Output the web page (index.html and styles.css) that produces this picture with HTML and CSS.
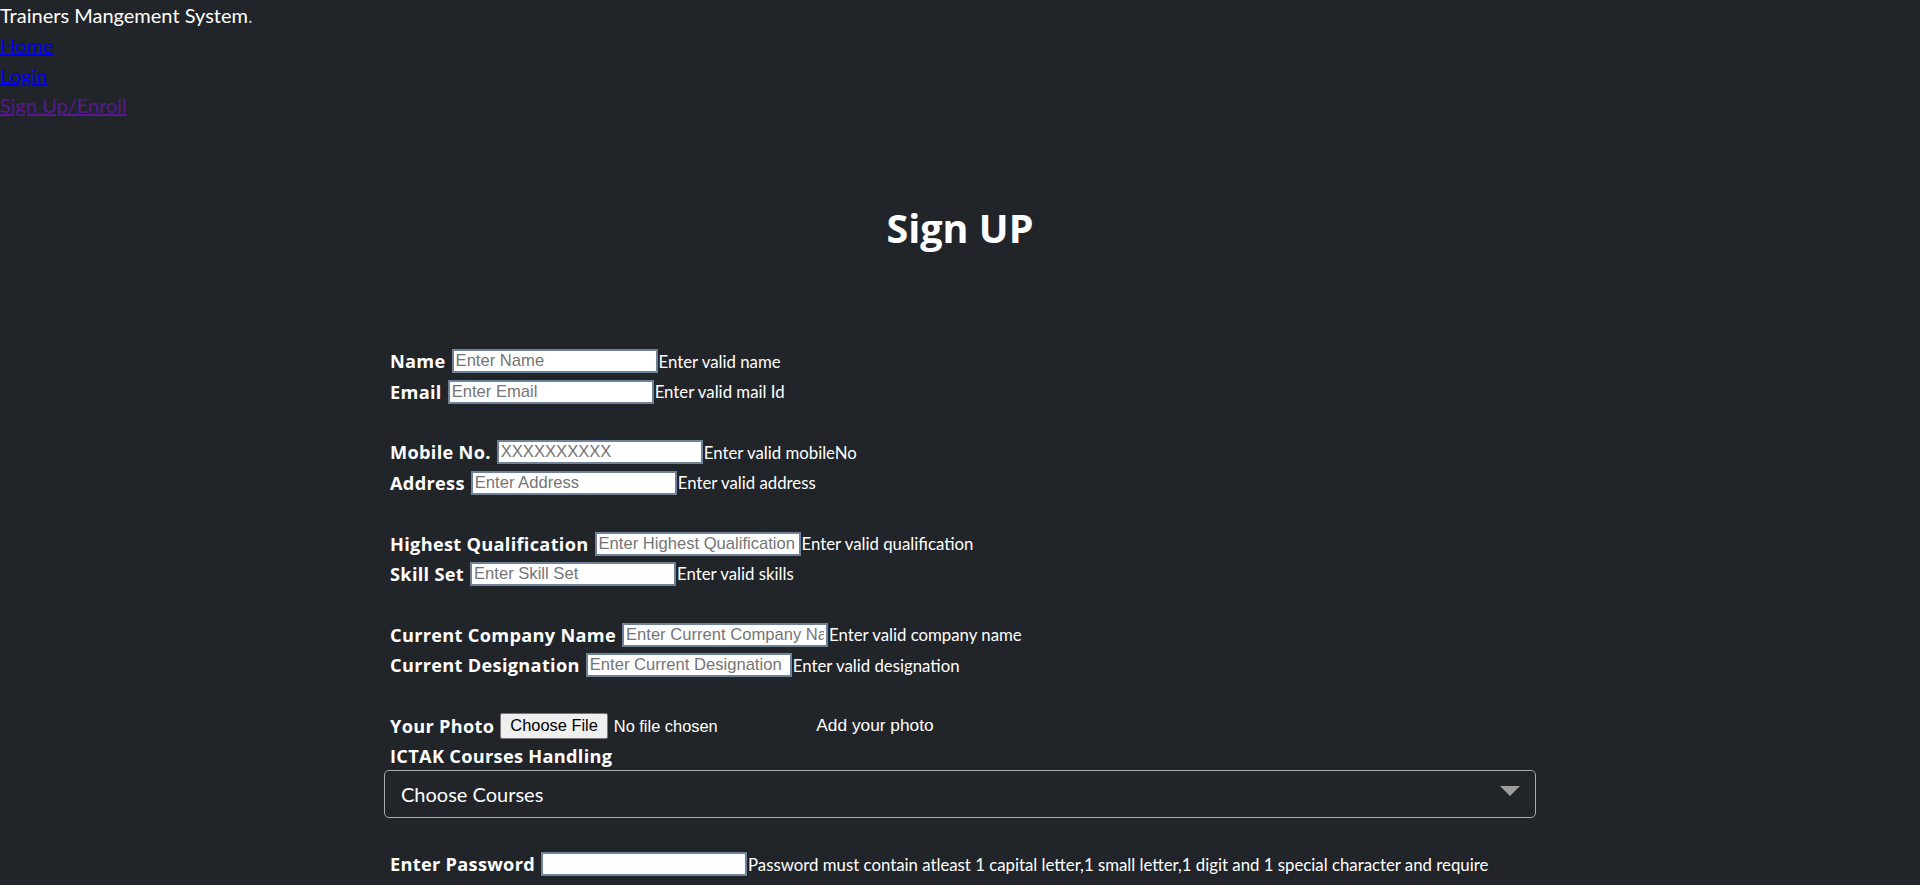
FILE: index.html
```html
<!DOCTYPE html>
<html lang="en">
<head>
<meta charset="utf-8">
<title>Sign UP</title>
<link rel="stylesheet" href="styles.css">
</head>
<body>
<header class="top">
  <div class="brand">Trainers Mangement System<span class="dot">.</span></div>
  <a class="nav-link" href="#home">Home</a>
  <a class="nav-link" href="#login">Login</a>
  <a class="nav-link visited" href="#signup">Sign Up/Enroll</a>
</header>
<main class="page">
  <h1 class="title">Sign UP</h1>
  <form class="form">
    <div class="row"><label class="lbl">Name</label><input class="txt" type="text" placeholder="Enter Name"><span class="hint">Enter valid name</span></div>
    <div class="row"><label class="lbl">Email</label><input class="txt" type="text" placeholder="Enter Email"><span class="hint">Enter valid mail Id</span></div>
    <div class="spacer"></div>
    <div class="row"><label class="lbl">Mobile No.</label><input class="txt" type="text" placeholder="XXXXXXXXXX"><span class="hint">Enter valid mobileNo</span></div>
    <div class="row"><label class="lbl">Address</label><input class="txt" type="text" placeholder="Enter Address"><span class="hint">Enter valid address</span></div>
    <div class="spacer"></div>
    <div class="row"><label class="lbl">Highest Qualification</label><input class="txt" type="text" placeholder="Enter Highest Qualification"><span class="hint">Enter valid qualification</span></div>
    <div class="row"><label class="lbl">Skill Set</label><input class="txt" type="text" placeholder="Enter Skill Set"><span class="hint">Enter valid skills</span></div>
    <div class="spacer"></div>
    <div class="row"><label class="lbl">Current Company Name</label><input class="txt" type="text" placeholder="Enter Current Company Name"><span class="hint">Enter valid company name</span></div>
    <div class="row"><label class="lbl">Current Designation</label><input class="txt" type="text" placeholder="Enter Current Designation"><span class="hint">Enter valid designation</span></div>
    <div class="spacer"></div>
    <div class="row"><label class="lbl">Your Photo</label><input class="file" type="file"><span class="hint arial">Add your photo</span></div>
    <div class="row"><label class="lbl">ICTAK Courses Handling</label></div>
    <div class="select-wrap">
      <select class="select">
        <option>Choose Courses</option>
      </select>
    </div>
    <div class="spacer"></div>
    <div class="row"><label class="lbl">Enter Password</label><input class="txt pwd" type="password"><span class="hint">Password must contain atleast 1 capital letter,1 small letter,1 digit and 1 special character and require</span></div>
  </form>
</main>
</body>
</html>
```

FILE: styles.css
```css
html, body {
  margin: 0;
  padding: 0;
}
body {
  background: #212529;
  color: #ffffff;
  font-family: Lato, "Open Sans", sans-serif;
  overflow: hidden;
  height: 885px;
}
.top {
  display: flex;
  flex-direction: column;
  align-items: flex-start;
  font-size: 20px;
  line-height: 30px;
}
.brand {
  color: #ffffff;
}
.dot {
  color: #b9bcc0;
}
.nav-link {
  color: #0000ee;
  text-decoration: underline;
}
.nav-link.visited {
  color: #551a8b;
}
.page {
  display: flex;
  flex-direction: column;
  align-items: center;
}
.title {
  margin: 84px 0 0;
  font-family: "Open Sans", Lato, sans-serif;
  font-size: 39.5px;
  line-height: 48px;
  font-weight: 700;
}
.form {
  width: 1152px;
  margin-top: 94px;
  display: flex;
  flex-direction: column;
}
.row {
  display: flex;
  align-items: center;
  height: 30.4px;
  padding-left: 6px;
  font-size: 17.6px;
}
.spacer {
  height: 30.4px;
}
.lbl {
  font-family: "Open Sans", Lato, sans-serif;
  font-weight: 700;
  font-size: 18.2px;
  letter-spacing: 0.3px;
  margin-right: 6px;
  white-space: nowrap;
}
.txt {
  box-sizing: border-box;
  width: 206px;
  height: 24px;
  border: 2px solid #6f8297;
  padding: 1px 2px;
  background: #ffffff;
  font-family: "Liberation Sans", Arial, sans-serif;
  font-size: 16.6px;
  color: #000;
  outline: none;
  margin: 0;
}
.txt::placeholder {
  color: #757575;
}
.hint {
  margin-left: 1px;
  white-space: nowrap;
  font-size: 16.8px;
}
.hint.arial {
  font-family: "Liberation Sans", Arial, sans-serif;
  font-size: 17.3px;
}
.file {
  width: 315px;
  height: 26px;
  margin: 0;
  font-family: "Liberation Sans", Arial, sans-serif;
  font-size: 16.4px;
  color: #ffffff;
}
.file::file-selector-button {
  font-family: "Liberation Sans", Arial, sans-serif;
  font-size: 16.4px;
  background: #efefef;
  border: 1px solid #767676;
  border-radius: 2px;
  padding: 1px 9px;
  margin-right: 6px;
  height: 26px;
  color: #000;
}
.select-wrap {
  position: relative;
  margin-top: -1px;
}
.select-wrap::after {
  content: "";
  position: absolute;
  right: 16px;
  top: 16px;
  border-left: 10px solid transparent;
  border-right: 10px solid transparent;
  border-top: 10px solid #9e9e9e;
  pointer-events: none;
}
.select {
  appearance: none;
  -webkit-appearance: none;
  width: 100%;
  height: 48px;
  box-sizing: border-box;
  background: #212529;
  color: #ffffff;
  border: 1px solid #a8abae;
  border-radius: 5px;
  padding: 0 16px;
  font-family: Lato, "Open Sans", sans-serif;
  font-size: 20px;
  outline: none;
}
```
